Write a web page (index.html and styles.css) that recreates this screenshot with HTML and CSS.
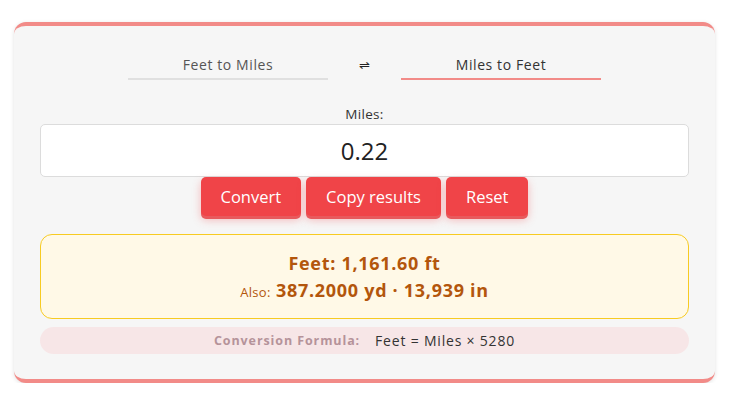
FILE: index.html
```html
<!DOCTYPE html>
<html lang="en">
  <head>
    <meta charset="UTF-8" />
    <meta name="viewport" content="width=device-width, initial-scale=1.0" />
    <title>Miles to Feet</title>
    <link rel="stylesheet" href="styles.css">
  </head>
  <body>
    <div class="card">
      <!-- tabs -->
      <div class="tabs">
        <a class="tab" href="javascript:;">Feet to Miles</a>
        <span class="swap">&#8652;</span>
        <a class="tab active" href="javascript:;">Miles to Feet</a>
      </div>

      <label class="label" for="val">Miles:</label>
      <input class="field" id="val" type="text" value="0.22" />

      <div class="buttons">
        <button class="btn">Convert</button>
        <button class="btn">Copy results</button>
        <button class="btn">Reset</button>
      </div>

      <div class="result">
        <div class="main">Feet: 1,161.60 ft</div>
        <div class="also"><span class="small">Also:</span> 387.2000 yd &middot; 13,939 in</div>
      </div>

      <div class="formula">
        <span class="f-label">Conversion Formula:</span>
        <span class="f-text">Feet = Miles &times; 5280</span>
      </div>
    </div>
  </body>
</html>
```

FILE: styles.css
```css
* {
  margin: 0;
  padding: 0;
  box-sizing: border-box;
}
body {
  font-family: "Open Sans", "Noto Sans", sans-serif;
  background: #fff;
  color: #333;
}
.card {
  width: 701px;
  margin: 22px 0 0 14px;
  background: #f6f6f6;
  border-top: 4px solid #f28b88;
  border-bottom: 4px solid #f28b88;
  border-radius: 12px;
  box-shadow: 0 1px 4px rgba(0, 0, 0, 0.12);
  padding: 28px 26px 25px;
  display: flex;
  flex-direction: column;
}
.tabs {
  display: flex;
  justify-content: center;
  align-items: center;
  gap: 26px;
}
.tab {
  width: 200px;
  text-align: center;
  font-size: 14px;
  letter-spacing: 0.6px;
  line-height: 20px;
  padding: 1px 0 3px;
  color: #555;
  text-decoration: none;
  border-bottom: 2px solid #e0e0e0;
}
.tab.active {
  color: #333;
  border-bottom-color: #f28b88;
}
.swap {
  font-size: 13px;
  color: #222;
  width: 21px;
  text-align: center;
  margin-bottom: 4px;
}
.label {
  text-align: center;
  font-size: 13.5px;
  letter-spacing: 0.3px;
  line-height: 18px;
  margin-top: 25px;
  margin-bottom: 1px;
  color: #333;
}
.field {
  height: 53px;
  border: 1px solid #dcdcdc;
  border-radius: 5px;
  background: #fff;
  text-align: center;
  font-family: inherit;
  font-size: 24px;
  color: #222;
  outline: none;
}
.buttons {
  display: flex;
  justify-content: center;
  gap: 5px;
}
.btn {
  height: 39px;
  padding: 0 20px;
  border: none;
  border-radius: 5px;
  background: #f04448;
  color: #fff;
  font-family: inherit;
  font-size: 16.5px;
  box-shadow: 0 3px 0 #e85a5d, 0 4px 9px rgba(240, 68, 72, 0.35);
  margin-bottom: 3px;
}
.result {
  margin-top: 15px;
  height: 85px;
  background: #fff9e7;
  border: 1px solid #f7cb22;
  border-radius: 12px;
  display: flex;
  flex-direction: column;
  justify-content: center;
  align-items: center;
  color: #b3560c;
  font-weight: 700;
  font-size: 18px;
  letter-spacing: 0.7px;
  line-height: 27px;
  padding-top: 2px;
}
.also .small {
  font-size: 13px;
  font-weight: 400;
  letter-spacing: 0.3px;
}
.formula {
  margin-top: 8px;
  height: 27px;
  background: #f7e6e7;
  border-radius: 14px;
  display: flex;
  justify-content: center;
  align-items: center;
  gap: 15px;
}
.f-label {
  font-size: 12.5px;
  font-weight: 700;
  color: #b5939a;
  letter-spacing: 0.9px;
}
.f-text {
  font-size: 14px;
  color: #333;
  letter-spacing: 0.8px;
}
```
